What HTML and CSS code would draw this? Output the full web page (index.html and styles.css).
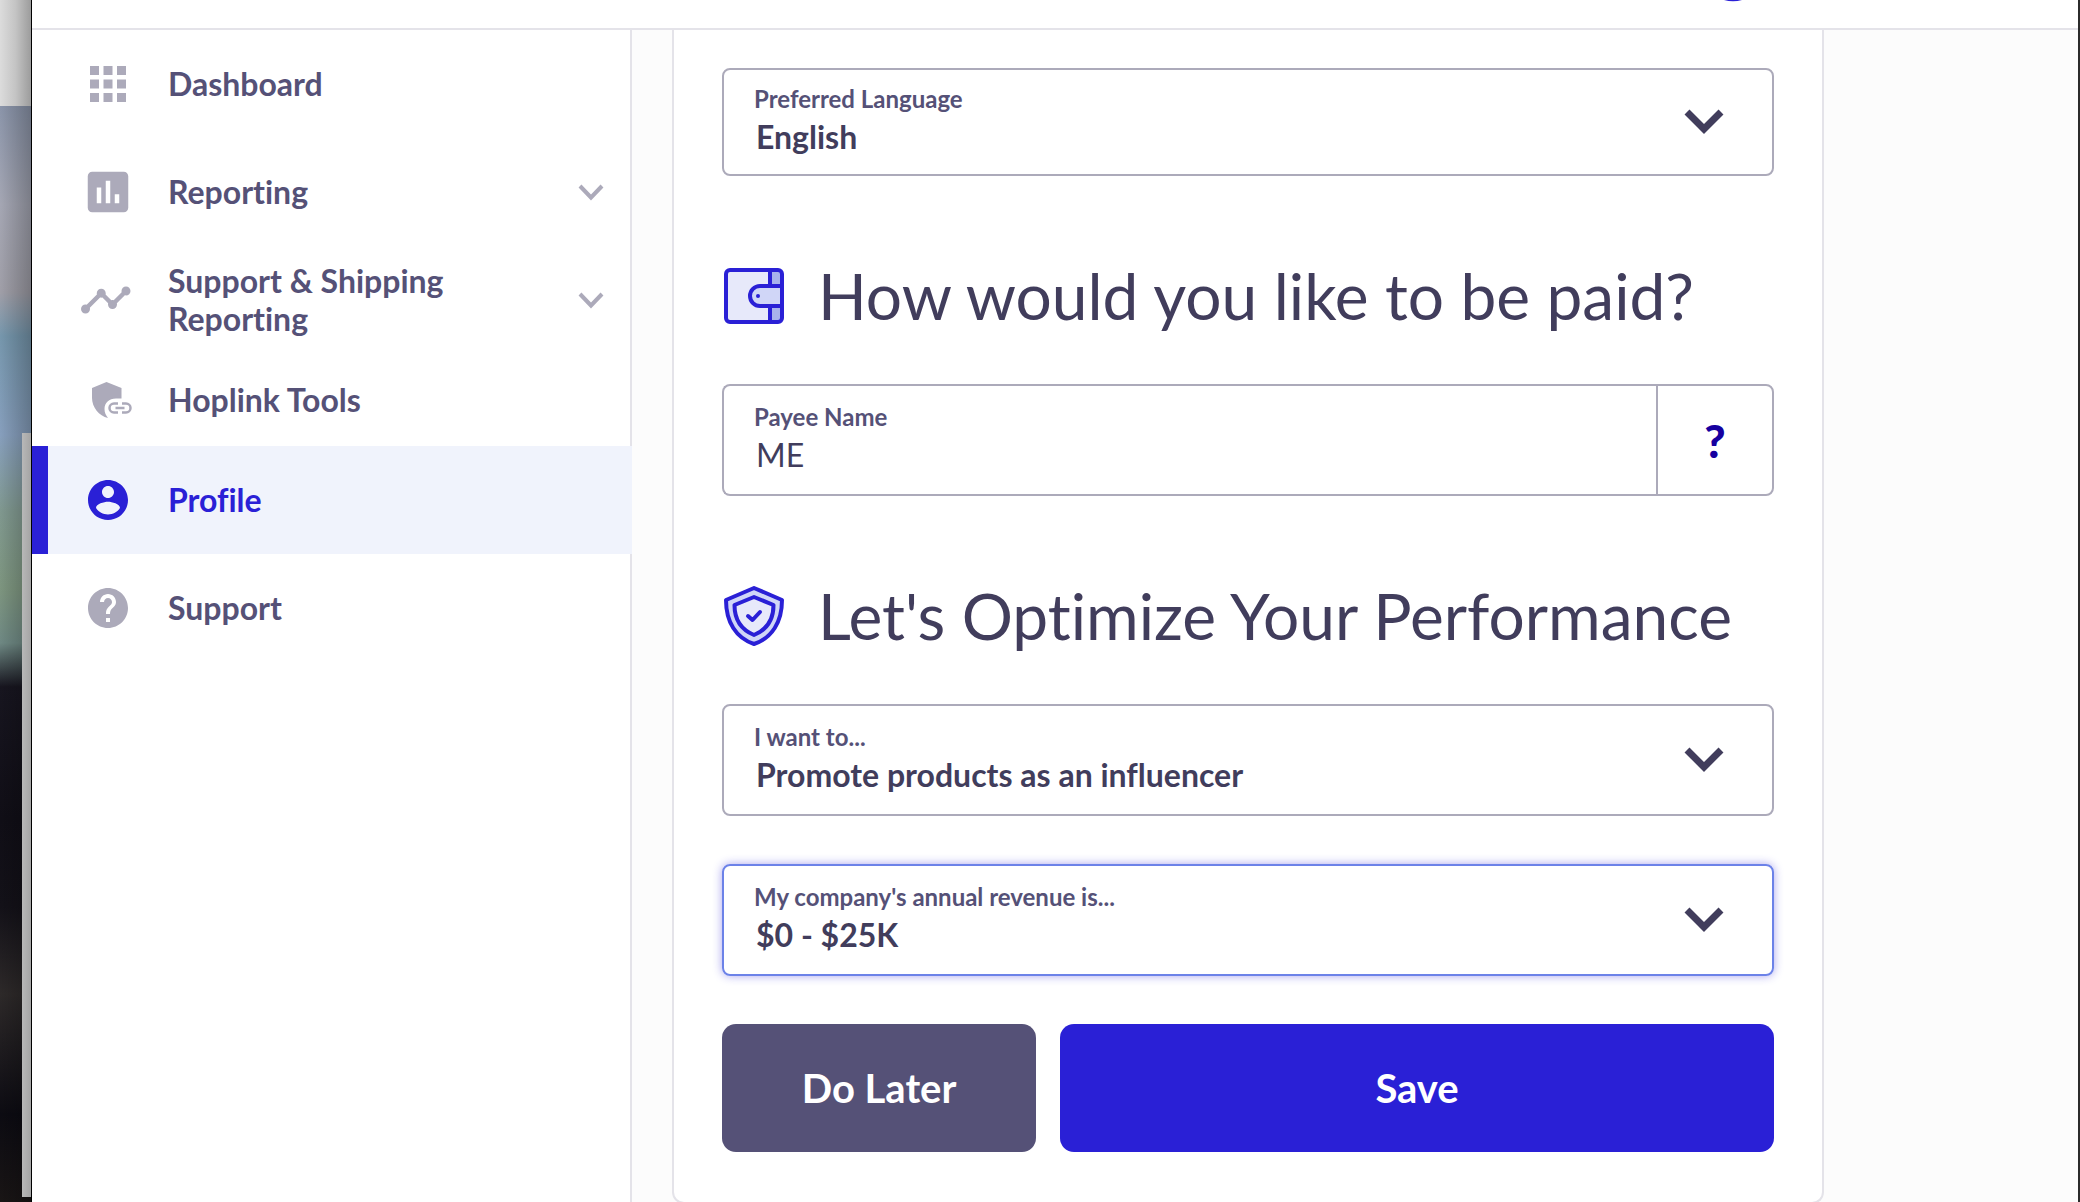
FILE: index.html
```html
<!DOCTYPE html>
<html lang="en">
<head>
    <meta charset="UTF-8">
    <meta name="viewport" content="width=device-width, initial-scale=1.0">
    <title>Profile</title>
    <link rel="stylesheet" href="styles.css">
</head>
<body>
    <!-- Desktop showing behind the window -->
    <div class="desktop">
        <div class="desktop-bar"></div>
        <div class="desktop-photo">
            <div class="desktop-window"></div>
        </div>
    </div>

    <div class="window">
        <header class="topbar">
            <svg class="topbar-badge" viewBox="0 0 18 2" aria-hidden="true"><path d="M0 0h18Q9 2.500 0 0z" fill="#2a20d6"/></svg>
        </header>

        <div class="layout">
            <!-- Sidebar -->
            <nav class="sidebar">
                <a href="#" class="nav-item">
                    <svg class="nav-icon" viewBox="0 0 24 24"><path d="M4 8h4V4H4v4zm6 12h4v-4h-4v4zm-6 0h4v-4H4v4zm0-6h4v-4H4v4zm6 0h4v-4h-4v4zm6-10v4h4V4h-4zm-6 4h4V4h-4v4zm6 6h4v-4h-4v4zm0 6h4v-4h-4v4z"/></svg>
                    <span class="nav-text">Dashboard</span>
                </a>
                <a href="#" class="nav-item">
                    <svg class="nav-icon" viewBox="0 0 24 24"><path d="M19 3H5c-1.100 0-2 .9-2 2v14c0 1.100.9 2 2 2h14c1.100 0 2-.9 2-2V5c0-1.100-.9-2-2-2zM9 17H7v-7h2v7zm4 0h-2V7h2v10zm4 0h-2v-4h2v4z"/></svg>
                    <span class="nav-text">Reporting</span>
                    <svg class="nav-chevron" viewBox="0 0 26 18"><path d="M2 3l11 11.500L24 3"/></svg>
                </a>
                <a href="#" class="nav-item">
                    <svg class="nav-icon" viewBox="1 0 24 24"><path d="M23 8c0 1.100-.9 2-2 2-.18 0-.35-.02-.51-.07l-3.560 3.550c.05.16.07.34.07.52 0 1.100-.9 2-2 2s-2-.9-2-2c0-.18.02-.36.07-.52l-2.550-2.550c-.16.05-.34.07-.52.07s-.36-.02-.52-.07l-4.550 4.560c.05.16.07.33.07.51 0 1.100-.9 2-2 2s-2-.9-2-2 .9-2 2-2c.18 0 .35.02.51.07l4.560-4.550C8.020 9.360 8 9.180 8 9c0-1.100.9-2 2-2s2 .9 2 2c0 .18-.02.36-.07.52l2.550 2.550c.16-.05.34-.07.52-.07s.36.02.52.07l3.550-3.560C19.020 8.350 19 8.180 19 8c0-1.100.9-2 2-2s2 .9 2 2z"/></svg>
                    <span class="nav-text">Support &amp; Shipping Reporting</span>
                    <svg class="nav-chevron" viewBox="0 0 26 18"><path d="M2 3l11 11.500L24 3"/></svg>
                </a>
                <a href="#" class="nav-item compact">
                    <svg class="nav-icon" viewBox="0 0 54 54"><path d="M25.500 9L40.500 15v10.500H35C28 25.500 23.500 30 23.500 36c0 4 1.500 6 3.500 9C18 43 11 34 11 25V15z"/><path d="M37 30.500h-4a4.500 4.500 0 0 0 0 9h4M41 30.500h4a4.500 4.500 0 0 1 0 9h-4M34.500 35h9" fill="none" stroke="currentColor" stroke-width="2.500"/></svg>
                    <span class="nav-text">Hoplink Tools</span>
                </a>
                <a href="#" class="nav-item active" aria-current="page">
                    <svg class="nav-icon small" viewBox="0 0 24 24"><path d="M12 2C6.480 2 2 6.480 2 12s4.480 10 10 10 10-4.480 10-10S17.520 2 12 2zm0 3c1.660 0 3 1.340 3 3s-1.340 3-3 3-3-1.340-3-3 1.340-3 3-3zm0 14.200c-2.500 0-4.710-1.280-6-3.220.03-1.990 4-3.080 6-3.080 1.990 0 5.970 1.090 6 3.080-1.290 1.940-3.500 3.220-6 3.220z"/></svg>
                    <span class="nav-text">Profile</span>
                </a>
                <a href="#" class="nav-item">
                    <svg class="nav-icon small" viewBox="0 0 24 24"><path d="M12 2C6.480 2 2 6.480 2 12s4.480 10 10 10 10-4.480 10-10S17.520 2 12 2zm1 17h-2v-2h2v2zm2.070-7.750l-.9.920C13.450 12.900 13 13.500 13 15h-2v-.5c0-1.100.45-2.100 1.170-2.830l1.240-1.260c.37-.36.59-.86.59-1.410 0-1.100-.9-2-2-2s-2 .9-2 2H8c0-2.210 1.790-4 4-4s4 1.790 4 4c0 .88-.36 1.680-.93 2.250z"/></svg>
                    <span class="nav-text">Support</span>
                </a>
            </nav>

            <!-- Profile form -->
            <main class="content">
                <form class="card">
                    <div class="field short">
                        <label for="language">Preferred Language</label>
                        <select id="language"><option>English</option></select>
                        <svg class="field-chevron" viewBox="0 0 40 26"><path d="M3 3l17 17L37 3"/></svg>
                    </div>

                    <h2 class="section-title">
                        <svg class="section-icon" viewBox="0 0 60 60">
                            <rect x="2" y="4" width="56" height="52" rx="4" fill="#e7e9fa"/>
                            <path d="M46 4h12v52H46z" fill="#a8b2ec"/>
                            <path d="M58 20H36a10 10 0 0 0 0 20h22z" fill="#d0d6f7"/>
                            <path d="M46 4v16M46 40v16M58 20H36a10 10 0 0 0 0 20h22" fill="none" stroke="#2a20d6" stroke-width="4"/>
                            <rect x="2" y="4" width="56" height="52" rx="4" fill="none" stroke="#2a20d6" stroke-width="4"/>
                            <circle cx="34" cy="30" r="2" fill="#2a20d6"/>
                        </svg>
                        How would you like to be paid?
                    </h2>

                    <div class="field-group">
                        <div class="field">
                            <label for="payee">Payee Name</label>
                            <input type="text" id="payee" value="ME">
                        </div>
                        <button type="button" class="help-btn" aria-label="Help with payee name">?</button>
                    </div>

                    <h2 class="section-title">
                        <svg class="section-icon" viewBox="0 0 60 60">
                            <g stroke="#2a20d6" stroke-width="4" stroke-linejoin="round" stroke-linecap="round">
                                <path d="M30 2L58 14C58 36 48 52 30 58C12 52 2 36 2 14z" fill="#d0d6f7"/>
                                <path d="M30 11L49.500 19C49.500 34 42 44 30 49C18 44 10.500 34 10.500 19z" fill="#e7e9fa"/>
                                <path d="M24 30l4.500 4L36 26" fill="none"/>
                            </g>
                        </svg>
                        Let's Optimize Your Performance
                    </h2>

                    <div class="field">
                        <label for="goal">I want to...</label>
                        <select id="goal"><option>Promote products as an influencer</option></select>
                        <svg class="field-chevron" viewBox="0 0 40 26"><path d="M3 3l17 17L37 3"/></svg>
                    </div>
                    <div class="field focused">
                        <label for="revenue">My company's annual revenue is...</label>
                        <select id="revenue"><option>$0 - $25K</option></select>
                        <svg class="field-chevron" viewBox="0 0 40 26"><path d="M3 3l17 17L37 3"/></svg>
                    </div>

                    <div class="actions">
                        <button type="button" class="btn secondary">Do Later</button>
                        <button type="submit" class="btn">Save</button>
                    </div>
                </form>
            </main>
        </div>
    </div>
</body>
</html>
```
FILE: styles.css
```css
* {
    box-sizing: border-box;
}
body {
    display: flex;
    height: 100vh;
    margin: 0;
    font-family: Lato, "Open Sans", sans-serif;
    font-variant-ligatures: none;
    color: #413d5c;
}
button, input, select {
    font-family: inherit;
    font-variant-ligatures: inherit;
    color: inherit;
}

/* Desktop strip */
.desktop {
    display: flex;
    flex-direction: column;
    flex: none;
    width: 31px;
}
.desktop-bar {
    height: 106px;
    background: linear-gradient(to right, #dcdcdc, #c4c4c4 50%, #9c9c9c);
}
.desktop-photo {
    display: flex;
    flex: 1;
    justify-content: flex-end;
    padding: 327px 0 5px;
    background:
        linear-gradient(to right, rgba(0, 0, 0, 0), rgba(0, 0, 0, 0.25)),
        linear-gradient(#8b95aa, #a5a7b4 9%, #a09fa8 17%, #7697ad 21%, #879fbd 30%, #80988f 37%, #7d957f 44%, #6e8883 49%, #17151f 53%, #100e16 65%, #131118 73%, #2d2929 81%, #0c0b12 92%, #191515);
}
.desktop-window {
    width: 9px;
    background: linear-gradient(to right, #b8b8b8, #a4a4a4);
}

/* Window */
.window {
    display: flex;
    flex: 1;
    flex-direction: column;
    min-width: 0;
    background: #fff;
    border-left: 1px solid #000;
    border-right: 2px solid #2b2b2b;
}
.topbar {
    display: flex;
    flex: none;
    justify-content: flex-end;
    height: 30px;
    padding-right: 336px;
    border-bottom: 2px solid #e4e3e9;
}
.topbar-badge {
    width: 18px;
    height: 2px;
}
.layout {
    display: flex;
    flex: 1;
    min-height: 0;
}

/* Sidebar */
.sidebar {
    flex: none;
    width: 600px;
    background: linear-gradient(#e4e3e9, #e4e3e9) right / 2px 100% no-repeat;
}
.nav-item {
    display: flex;
    align-items: center;
    gap: 33px;
    height: 108px;
    padding: 0 28px 0 33px;
    border-left: 16px solid transparent;
    color: #555177;
    font-size: 32px;
    font-weight: 700;
    line-height: 38px;
    text-decoration: none;
}
.nav-item.compact {
    height: 92px;
}
.nav-item.active {
    background: #f0f3fc;
    border-left-color: #2a20d6;
    color: #2a20d6;
}
.nav-icon {
    flex: none;
    width: 54px;
    height: 54px;
    color: #acaaba;
    fill: currentColor;
}
.nav-icon.small {
    width: 48px;
    height: 48px;
    margin: 0 3px;
}
.active .nav-icon {
    color: #2a20d6;
}
.nav-text {
    flex: 1;
    max-width: 320px;
}
.nav-chevron {
    width: 26px;
    height: 18px;
    margin-left: auto;
    fill: none;
    stroke: #acaaba;
    stroke-width: 4;
}

/* Form card */
.content {
    flex: 1;
    min-width: 0;
    padding: 0 40px;
    overflow: hidden;
    background: #fcfcfc;
}
.card {
    max-width: 1152px;
    padding: 38px 48px 50px;
    background: #fff;
    border: 2px solid #e4e3e9;
    border-top: none;
    border-radius: 0 0 12px 12px;
}
.field {
    display: grid;
    grid-template-columns: 1fr auto;
    grid-template-rows: 36px 38px 8px;
    align-content: center;
    align-items: center;
    height: 112px;
    padding: 0 48px 0 30px;
    border: 2px solid #acaaba;
    border-radius: 8px;
}
.field + .field {
    margin-top: 48px;
}
.field.short {
    height: 108px;
}
.field.focused {
    border-color: #6c82e8;
    box-shadow: 0 0 10px rgba(42, 32, 214, 0.4);
}
.field label {
    color: #555177;
    font-size: 24px;
    font-weight: 700;
    line-height: 36px;
}
.field select, .field input {
    grid-column: 1;
    width: 100%;
    height: 38px;
    padding: 0 2px;
    border: none;
    outline: none;
    background: none;
    font-size: 32px;
}
.field select {
    appearance: none;
    font-weight: 700;
}
.field-chevron {
    grid-column: 2;
    grid-row: 1 / 4;
    width: 40px;
    height: 26px;
    fill: none;
    stroke: #413d5c;
    stroke-width: 7;
}
.field-group {
    display: flex;
}
.field-group .field {
    flex: 1;
    border-right: none;
    border-radius: 8px 0 0 8px;
}
.help-btn {
    width: 118px;
    background: none;
    border: 2px solid #acaaba;
    border-radius: 0 8px 8px 0;
    color: #1600a0;
    font-size: 46px;
    font-weight: 900;
}
.section-title {
    display: flex;
    align-items: center;
    gap: 34px;
    margin: 88px 0 56px;
    font-size: 64px;
    font-weight: 400;
    line-height: 64px;
    white-space: nowrap;
}
.section-icon {
    flex: none;
    width: 60px;
    height: 60px;
    margin-left: 2px;
}
.actions {
    display: grid;
    grid-template-columns: 11fr 25fr;
    gap: 24px;
    margin-top: 48px;
}
.btn {
    height: 128px;
    background: #2a20d6;
    border: none;
    border-radius: 14px;
    color: #fff;
    font-size: 40px;
    font-weight: 700;
}
.btn.secondary {
    background: #555177;
}
```
